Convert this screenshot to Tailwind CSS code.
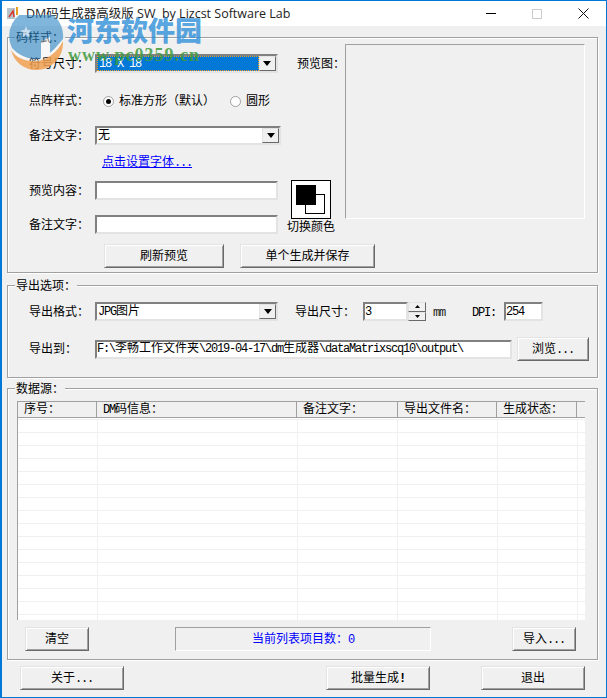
<!DOCTYPE html>
<html>

<head>
    <meta charset="UTF-8">
    <meta name="viewport" content="width=device-width, initial-scale=1.0">
    <script src="https://cdn.jsdelivr.net/npm/@tailwindcss/browser@4"></script>
</head>

<body class="bg-[#f0f0f0] overflow-hidden">
    <div class="relative w-[607px] h-[698px] overflow-hidden bg-[#f0f0f0] border border-l-2 border-[#0078d7] text-[12px] leading-[14px] text-black font-['Liberation_Mono','Noto_Sans_CJK_SC',monospace]">

        <!-- title bar -->
        <div class="flex items-center h-[25px] bg-white">
            <svg class="ml-[5px] w-[12px] h-[13px]" viewBox="0 0 12 13">
                <rect x="0" y="1" width="8" height="11" fill="#b8c4cc" />
                <path d="M2 10 L6 4 L7 10" fill="none" stroke="#d83a2a" stroke-width="1.5" />
                <rect x="9" y="0" width="2" height="8" fill="#e8a020" />
            </svg>
            <span class="ml-[7px] text-[12.5px] text-[#222] font-['Open_Sans','Noto_Sans_CJK_SC',sans-serif] whitespace-pre">DM码生成器高级版 SW  by Lizcst Software Lab</span>
            <div class="ml-auto flex">
                <div class="w-[46px] h-[25px] flex items-center justify-center">
                    <div class="w-[10px] h-px bg-black"></div>
                </div>
                <div class="w-[46px] h-[25px] flex items-center justify-center">
                    <div class="w-[10px] h-[10px] border border-[#cccccc]"></div>
                </div>
                <div class="w-[46px] h-[25px] flex items-center justify-center">
                    <svg class="w-[11px] h-[11px]" viewBox="0 0 11 11">
                        <path d="M0.5 0.5 L10.5 10.5 M10.5 0.5 L0.5 10.5" stroke="#111" stroke-width="1" fill="none" />
                    </svg>
                </div>
            </div>
        </div>

        <!-- 码样式 -->
        <div class="relative flex ml-[5px] mt-[11px] w-[591px] h-[236px] border border-[#a0a0a0] shadow-[1px_1px_0_#fff,inset_1px_1px_0_#fff]">
            <span class="absolute -top-[6px] left-[7px] px-px bg-[#f0f0f0]">码样式：</span>
            <div class="w-[337px] shrink-0">
                <div class="flex items-center mt-[16px] pl-[21px] h-[19px] [&>span]:pt-[2px]">
                    <span class="w-[66px] shrink-0">符号尺寸：</span>
                    <div class="flex w-[183px] h-[19px] border-2 border-t-[#808080] border-l-[#808080] border-r-[#e3e3e3] border-b-[#e3e3e3] bg-white">
                        <div class="flex-1 flex items-center bg-[#0078d7] text-white border border-dotted border-[#f7a020] pl-px"><span class="tracking-[-1.2px] whitespace-pre">18 X 18</span></div>
                        <div class="flex items-center justify-center w-[17px] bg-[#f0f0f0] border border-t-[#e3e3e3] border-l-[#e3e3e3] border-r-[#696969] border-b-[#696969]">
                            <svg class="w-[8px] h-[5px]" viewBox="0 0 8 5"><path d="M0 0 H8 L4 5 Z" fill="#000" /></svg>
                        </div>
                    </div>
                    <span class="ml-[19px] shrink-0">预览图：</span>
                </div>

                <div class="flex items-center mt-[18px] pl-[21px] h-[20px] [&>span]:pt-[2px]">
                    <span class="w-[74px] shrink-0">点阵样式：</span>
                    <div class="flex items-center justify-center w-[11px] h-[11px] rounded-full bg-white border border-[#a0a0a0]">
                        <div class="w-[5px] h-[5px] rounded-full bg-black"></div>
                    </div>
                    <span class="ml-[5px]">标准方形（默认）</span>
                    <div class="ml-[15px] w-[11px] h-[11px] rounded-full bg-white border border-[#a0a0a0]"></div>
                    <span class="ml-[5px]">圆形</span>
                </div>

                <div class="flex items-center mt-[15px] pl-[21px] h-[19px] [&>span]:pt-[2px]">
                    <span class="w-[66px] shrink-0">备注文字：</span>
                    <div class="flex w-[186px] h-[19px] border-2 border-t-[#808080] border-l-[#808080] border-r-[#e3e3e3] border-b-[#e3e3e3] bg-white">
                        <div class="flex-1 flex items-center pl-px">无</div>
                        <div class="flex items-center justify-center w-[17px] bg-[#f0f0f0] border border-t-[#e3e3e3] border-l-[#e3e3e3] border-r-[#696969] border-b-[#696969]">
                            <svg class="w-[8px] h-[5px]" viewBox="0 0 8 5"><path d="M0 0 H8 L4 5 Z" fill="#000" /></svg>
                        </div>
                    </div>
                </div>

                <div class="flex items-center mt-[8px] pl-[94px] h-[18px] [&>span]:pt-[2px]">
                    <span class="text-[#0000ff] underline">点击设置字体<span class="tracking-[-1.2px]">...</span></span>
                </div>

                <div class="flex mt-[9px] h-[55px]">
                    <div class="pl-[21px] pt-px">
                        <div class="flex items-center h-[19px] [&>span]:pt-[2px]">
                            <span class="w-[66px] shrink-0">预览内容：</span>
                            <div class="w-[183px] h-[19px] border-2 border-t-[#808080] border-l-[#808080] border-r-[#e3e3e3] border-b-[#e3e3e3] bg-white"></div>
                        </div>
                        <div class="flex items-center h-[19px] mt-[15px] [&>span]:pt-[2px]">
                            <span class="w-[66px] shrink-0">备注文字：</span>
                            <div class="w-[183px] h-[19px] border-2 border-t-[#808080] border-l-[#808080] border-r-[#e3e3e3] border-b-[#e3e3e3] bg-white"></div>
                        </div>
                    </div>
                    <div class="ml-[9px] w-[48px] flex flex-col items-center">
                        <svg class="w-[40px] h-[39px]" viewBox="0 0 40 39">
                            <rect x="0.5" y="0.5" width="39" height="38" fill="#fff" stroke="#000" />
                            <rect x="14.5" y="14.5" width="19" height="19" fill="#fff" stroke="#000" />
                            <rect x="5" y="5" width="20" height="20" fill="#000" />
                        </svg>
                        <span class="mt-[2px] whitespace-nowrap">切换颜色</span>
                    </div>
                </div>

                <div class="flex mt-[9px] pl-[96px] gap-[16px]">
                    <div class="shrink-0 flex items-center justify-center pt-[2px] w-[120px] h-[24px] border border-t-[#e3e3e3] border-l-[#e3e3e3] border-r-[#696969] border-b-[#696969] shadow-[inset_1px_1px_0_#fff,inset_-1px_-1px_0_#a0a0a0]">刷新预览</div>
                    <div class="shrink-0 flex items-center justify-center pt-[2px] w-[135px] h-[24px] border border-t-[#e3e3e3] border-l-[#e3e3e3] border-r-[#696969] border-b-[#696969] shadow-[inset_1px_1px_0_#fff,inset_-1px_-1px_0_#a0a0a0]">单个生成并保存</div>
                </div>
            </div>
            <div class="mt-[6px] w-[240px] h-[175px] border border-t-[#a0a0a0] border-l-[#a0a0a0] border-r-white border-b-white"></div>
        </div>

        <!-- 导出选项 -->
        <div class="relative ml-[5px] mt-[12px] w-[591px] h-[93px] border border-[#a0a0a0] shadow-[1px_1px_0_#fff,inset_1px_1px_0_#fff]">
            <span class="absolute -top-[6px] left-[7px] px-px bg-[#f0f0f0]">导出选项：</span>
            <div class="flex items-center mt-[16px] pl-[21px] h-[19px] [&>span]:pt-[2px]">
                <span class="w-[66px] shrink-0">导出格式：</span>
                <div class="flex w-[183px] h-[19px] border-2 border-t-[#808080] border-l-[#808080] border-r-[#e3e3e3] border-b-[#e3e3e3] bg-white">
                    <div class="flex-1 flex items-center pl-px"><span class="tracking-[-1.2px]">JPG</span>图片</div>
                    <div class="flex items-center justify-center w-[17px] bg-[#f0f0f0] border border-t-[#e3e3e3] border-l-[#e3e3e3] border-r-[#696969] border-b-[#696969]">
                        <svg class="w-[8px] h-[5px]" viewBox="0 0 8 5"><path d="M0 0 H8 L4 5 Z" fill="#000" /></svg>
                    </div>
                </div>
                <span class="ml-[17px] w-[68px] shrink-0">导出尺寸：</span>
                <div class="flex items-center w-[45px] h-[19px] border-2 border-t-[#808080] border-l-[#808080] border-r-[#e3e3e3] border-b-[#e3e3e3] bg-white"><span class="tracking-[-1.2px]">3</span></div>
                <div class="flex flex-col w-[18px] h-[19px]">
                    <div class="flex-1 flex items-center justify-center border border-t-[#e3e3e3] border-l-[#e3e3e3] border-r-[#696969] border-b-[#696969]">
                        <svg class="w-[5px] h-[3px]" viewBox="0 0 5 3"><path d="M2.5 0 L5 3 H0 Z" fill="#000" /></svg>
                    </div>
                    <div class="flex-1 flex items-center justify-center border border-t-[#e3e3e3] border-l-[#e3e3e3] border-r-[#696969] border-b-[#696969]">
                        <svg class="w-[5px] h-[3px]" viewBox="0 0 5 3"><path d="M0 0 H5 L2.5 3 Z" fill="#000" /></svg>
                    </div>
                </div>
                <span class="ml-[7px] w-[39px] shrink-0 tracking-[-1.2px] text-[#222]">mm</span>
                <span class="w-[32px] shrink-0 tracking-[-1.2px]">DPI:</span>
                <div class="flex items-center w-[39px] h-[19px] border-2 border-t-[#808080] border-l-[#808080] border-r-[#e3e3e3] border-b-[#e3e3e3] bg-white"><span class="tracking-[-1.2px]">254</span></div>
            </div>
            <div class="flex items-center mt-[16px] pl-[21px] h-[24px] [&>span]:pt-[2px]">
                <span class="w-[66px] shrink-0">导出到：</span>
                <div class="flex items-center w-[417px] h-[19px] border-2 border-t-[#808080] border-l-[#808080] border-r-[#e3e3e3] border-b-[#e3e3e3] bg-white whitespace-nowrap overflow-hidden">
                    <span class="tracking-[-1.2px]">F:\</span>李畅工作文件夹<span class="tracking-[-1.2px]">\2019-04-17\dm</span>生成器<span class="tracking-[-1.2px]">\dataMatrixscq10\output\</span>
                </div>
                <div class="ml-[5px] flex items-center justify-center pt-[2px] w-[72px] h-[24px] border border-t-[#e3e3e3] border-l-[#e3e3e3] border-r-[#696969] border-b-[#696969] shadow-[inset_1px_1px_0_#fff,inset_-1px_-1px_0_#a0a0a0]">浏览<span class="tracking-[-1.2px]">...</span></div>
            </div>
        </div>

        <!-- 数据源 -->
        <div class="relative ml-[5px] mt-[10px] w-[591px] h-[272px] border border-[#a0a0a0] shadow-[1px_1px_0_#fff,inset_1px_1px_0_#fff]">
            <span class="absolute -top-[6px] left-[7px] px-px bg-[#f0f0f0]">数据源：</span>

            <div class="ml-[9px] mt-[12px] w-[568px] h-[219px] flex flex-col border-t border-l border-[#a0a0a0] bg-white overflow-hidden">
                <div class="flex h-[16px] shrink-0 border-b border-[#a0a0a0] bg-[#f0f0f0]">
                    <div class="w-[79px] pl-[6px] pt-px border-r border-[#a0a0a0]">序号：</div>
                    <div class="w-[200px] pl-[6px] pt-px border-r border-[#a0a0a0]"><span class="tracking-[-1.2px]">DM</span>码信息：</div>
                    <div class="w-[101px] pl-[6px] pt-px border-r border-[#a0a0a0]">备注文字：</div>
                    <div class="w-[99px] pl-[6px] pt-px border-r border-[#a0a0a0]">导出文件名：</div>
                    <div class="w-[80px] pl-[6px] pt-px border-r border-[#a0a0a0]">生成状态：</div>
                    <div class="flex-1"></div>
                </div>
                <div class="flex flex-1 mt-px bg-[linear-gradient(#f0f0f0_1px,transparent_1px)] bg-[size:100%_13px]">
                    <div class="w-[80px] border-r border-[#f0f0f0]"></div>
                    <div class="w-[200px] border-r border-[#f0f0f0]"></div>
                    <div class="w-[100px] border-r border-[#f0f0f0]"></div>
                    <div class="w-[100px] border-r border-[#f0f0f0]"></div>
                    <div class="w-[80px] border-r border-[#f0f0f0]"></div>
                    <div class="flex-1"></div>
                </div>
            </div>

            <div class="flex mt-[7px] ml-[17px]">
                <div class="flex items-center justify-center pt-[2px] w-[64px] h-[24px] border border-t-[#e3e3e3] border-l-[#e3e3e3] border-r-[#696969] border-b-[#696969] shadow-[inset_1px_1px_0_#fff,inset_-1px_-1px_0_#a0a0a0]">清空</div>
                <div class="ml-[86px] flex items-center justify-center pt-[2px] w-[256px] h-[24px] border border-t-[#a0a0a0] border-l-[#a0a0a0] border-r-white border-b-white text-[#0000ff]">当前列表项目数：<span class="tracking-[-1.2px]">0</span></div>
                <div class="ml-[81px] flex items-center justify-center pt-[2px] w-[64px] h-[24px] border border-t-[#e3e3e3] border-l-[#e3e3e3] border-r-[#696969] border-b-[#696969] shadow-[inset_1px_1px_0_#fff,inset_-1px_-1px_0_#a0a0a0]">导入<span class="tracking-[-1.2px]">...</span></div>
            </div>
        </div>

        <!-- bottom buttons -->
        <div class="flex mt-[6px] ml-[18px]">
            <div class="flex items-center justify-center pt-[2px] w-[104px] h-[24px] border border-t-[#e3e3e3] border-l-[#e3e3e3] border-r-[#696969] border-b-[#696969] shadow-[inset_1px_1px_0_#fff,inset_-1px_-1px_0_#a0a0a0]">关于<span class="tracking-[-1.2px]">...</span></div>
            <div class="ml-[202px] flex items-center justify-center pt-[2px] w-[104px] h-[24px] border border-t-[#e3e3e3] border-l-[#e3e3e3] border-r-[#696969] border-b-[#696969] shadow-[inset_1px_1px_0_#fff,inset_-1px_-1px_0_#a0a0a0]">批量生成<span class="font-bold tracking-[-1.2px]">!</span></div>
            <div class="ml-[51px] flex items-center justify-center pt-[2px] w-[104px] h-[24px] border border-t-[#e3e3e3] border-l-[#e3e3e3] border-r-[#696969] border-b-[#696969] shadow-[inset_1px_1px_0_#fff,inset_-1px_-1px_0_#a0a0a0]">退出</div>
        </div>

        <!-- site watermark over the window -->
        <svg class="absolute left-[6px] top-[14px] w-[56px] h-[56px] pointer-events-none" viewBox="0 0 56 56">
            <path d="M4 33 A27 27 0 1 1 55 24 C50 30 47 34 42 38 L42 22 L33 27 L33 43 C24 46 12 42 4 33 Z" fill="#2b86c5" fill-opacity="0.6" />
            <path d="M4 33 C12 42 24 46 33 43 L33 27 L42 22 L42 38 C47 34 50 30 55 24 C54 28 52 31 50 34 C40 44 22 48 9 41 Z" fill="#ffffff" fill-opacity="0.45" />
            <path d="M3 35 C10 47 30 50 42 41 C48 37 52 32 55 26 C56 42 44 55 28 55 C16 55 6 47 3 35 Z" fill="#f0a050" fill-opacity="0.85" />
            <path d="M18 11 L19.5 15 L23.5 15.5 L20.5 18 L21.5 22 L18 20 L14.5 22 L15.5 18 L12.5 15.5 L16.5 15 Z" fill="#ffffff" fill-opacity="0.6" />
        </svg>
        <div class="absolute left-[65px] top-[11px] text-[27px] leading-[36px] font-black text-[#2b8ed8]/80 whitespace-nowrap pointer-events-none font-['Noto_Sans_CJK_SC',sans-serif]">河东软件园</div>
        <div class="absolute left-[66px] top-[44px] text-[18px] leading-[20px] font-bold tracking-[1px] text-[#3f9a3f]/85 whitespace-nowrap pointer-events-none font-['Liberation_Serif',serif]">www.pc0359.cn</div>
    </div>
</body>

</html>
